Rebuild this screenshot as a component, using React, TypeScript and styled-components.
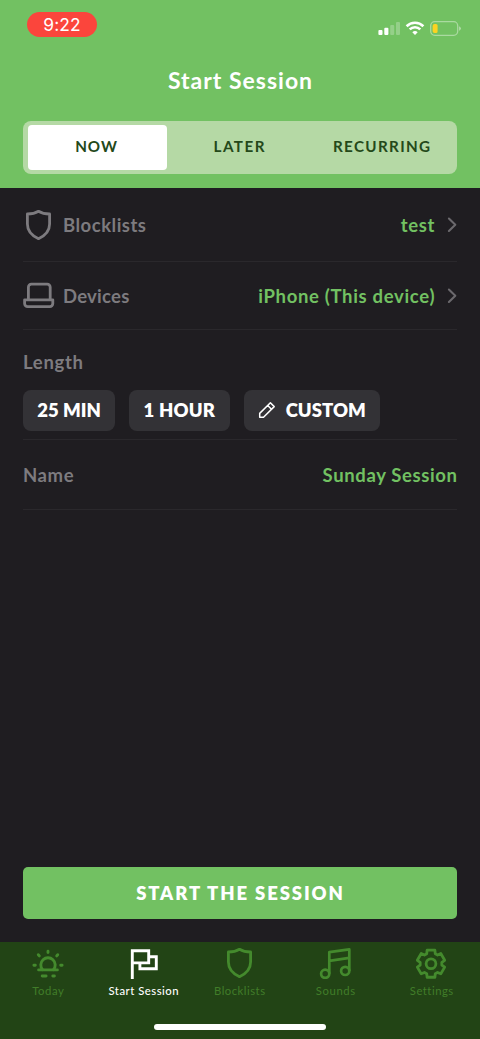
import React from 'react';
import type { ReactNode } from 'react';
import styled, { createGlobalStyle } from 'styled-components';

const color = {
  green: '#72c162',
  segment: '#b5d9a5',
  dark: '#1f1d21',
  chip: '#333236',
  line: '#2a282c',
  muted: '#7d7b7f',
  chevron: '#6b696d',
  bar: '#224415',
  tab: '#448a2d',
  tabText: '#417d29',
  ink: '#24491a',
};

const GlobalStyle = createGlobalStyle`
  * { box-sizing: border-box; }
  body { margin: 0; background: ${color.dark}; font-family: Lato, "Open Sans", sans-serif; }
  button { font: inherit; color: inherit; border: 0; padding: 0; background: none; }
  svg { display: block; flex: none; }
`;

const Screen = styled.div`
  width: 480px;
  height: 1039px;
  display: flex;
  flex-direction: column;
  background: ${color.dark};
  overflow: hidden;
`;

/* Tracked text; the negative margin drops the spacing after the last letter. */
const Text = styled.span<{ $size: number; $weight: number; $track: number; $color: string }>`
  font-size: ${(p) => p.$size}px;
  font-weight: ${(p) => p.$weight};
  letter-spacing: ${(p) => p.$track}px;
  margin-right: ${(p) => -p.$track}px;
  color: ${(p) => p.$color};
  line-height: 24px;
  white-space: nowrap;
`;

const Header = styled.header`
  height: 188px;
  flex: none;
  background: ${color.green};
  padding: 12px 23px 0;
  display: flex;
  flex-direction: column;
`;

const StatusBar = styled.div`
  height: 25px;
  display: flex;
  justify-content: space-between;
  padding-left: 4px;
`;

const Clock = styled.div`
  width: 70px;
  height: 25px;
  border-radius: 13px;
  background: #fb453c;
  color: #fff;
  font: 400 17.4px/25px Inter, sans-serif;
  letter-spacing: 0.1px;
  text-align: center;
`;

const StatusIcons = styled.div`
  display: flex;
  gap: 5px;
  align-items: flex-start;
  padding-top: 9px;
  margin-right: -3.5px;
`;

const Title = styled.h1`
  margin: 31px 0 0;
  height: 24px;
  line-height: 24px;
  display: flex;
  justify-content: center;
`;

const Segments = styled.div`
  margin-top: 29px;
  height: 53px;
  padding: 4px 5px;
  border-radius: 8px;
  background: ${color.segment};
  display: grid;
  grid-template-columns: 139px 1fr 138px;
`;

const Segment = styled.button<{ $active?: boolean }>`
  height: 45px;
  padding: 0 3px 3px 0;
  border-radius: 4px;
  background: ${(p) => (p.$active ? '#fff' : 'transparent')};
  display: flex;
  align-items: center;
  justify-content: center;
`;

const Main = styled.main`
  flex: 1;
  padding: 0 23px;
  display: flex;
  flex-direction: column;
`;

const Row = styled.div<{ $height: number }>`
  height: ${(p) => p.$height}px;
  border-bottom: 1px solid ${color.line};
  display: flex;
  align-items: center;
  justify-content: space-between;
`;

const RowLabel = styled.div`
  display: flex;
  align-items: center;
`;

const IconSlot = styled.span`
  width: 40px;
  display: flex;
  color: ${color.muted};
`;

const RowValue = styled.div`
  display: flex;
  align-items: center;
  gap: 12px;
  padding-right: 0.5px;
`;

const LengthSection = styled.section`
  height: 110px;
  padding-top: 20px;
  border-bottom: 1px solid ${color.line};
  display: flex;
  flex-direction: column;
`;

const Chips = styled.div`
  margin-top: 16px;
  display: flex;
  gap: 14px;
`;

const Chip = styled.button<{ $width: number }>`
  width: ${(p) => p.$width}px;
  height: 41px;
  padding-bottom: 1px;
  border-radius: 8px;
  background: ${color.chip};
  display: flex;
  align-items: center;
  justify-content: center;
  gap: 10px;
`;

const StartButton = styled.button`
  height: 52px;
  margin: auto 0 23px;
  padding-right: 1px;
  border-radius: 5px;
  background: ${color.green};
  display: flex;
  align-items: center;
  justify-content: center;
`;

const Footer = styled.footer`
  height: 97px;
  flex: none;
  background: ${color.bar};
  display: flex;
  flex-direction: column;
  align-items: center;
`;

const TabBar = styled.nav`
  width: 100%;
  height: 82px;
  display: grid;
  grid-template-columns: 95px 96px 96px 96px 96px;
`;

const Tab = styled.button<{ $active?: boolean }>`
  color: ${(p) => (p.$active ? '#fff' : color.tab)};
  display: flex;
  flex-direction: column;
  align-items: center;
  justify-content: flex-start;
  padding-top: 5px;
`;

const TabLabel = styled(Text)`
  padding-left: 1px;
`;

const HomeIndicator = styled.div`
  width: 172px;
  height: 6px;
  border-radius: 3px;
  background: #fff;
`;

const Shield = () => (
  <svg width="31" height="32" viewBox="-1.5 0 31 32" fill="none" stroke="currentColor" strokeWidth="2.8" strokeLinejoin="round">
    <path d="M14 2.3Q9.5 5 2.9 5V15C2.9 21.5 7 26.5 14 29.7C21 26.5 25.1 21.5 25.1 15V5Q18.5 5 14 2.3Z" />
  </svg>
);

const Laptop = () => (
  <svg width="32" height="28" viewBox="0.5 0 32 28" fill="none" stroke="currentColor" strokeWidth="2.8" strokeLinejoin="round">
    <path d="M5.9 17.6V5.2a3 3 0 0 1 3-3h15.8a3 3 0 0 1 3 3v12.4" />
    <path d="M2.1 17.8h28.2v3.8a3 3 0 0 1-3 3H5.1a3 3 0 0 1-3-3z" />
  </svg>
);

const Chevron = () => (
  <svg width="10" height="16" viewBox="0 0 10 16" fill="none" stroke={color.chevron} strokeWidth="2.1" strokeLinecap="round" strokeLinejoin="round">
    <path d="M1.9 1.6L8.3 7.8L1.9 14" />
  </svg>
);

const Pencil = () => (
  <svg width="18" height="18" viewBox="0 0 18 18" fill="none" stroke="#fff" strokeWidth="1.5" strokeLinejoin="round">
    <path d="M1.7 16.2V12.4L12.4 1.8L16.2 5.6L5.5 16.2ZM9.7 4.5l3.8 3.8" />
  </svg>
);

const Sunrise = () => (
  <svg width="32" height="32" viewBox="0 0 32 32" fill="none" stroke="currentColor" strokeWidth="2.9" strokeLinecap="round">
    <path d="M10.5 22.6a7.2 7.2 0 1 1 11 0" />
    <path d="M6.6 22.9h18.8M10.2 29h3.9M20.8 29h1.6" />
    <path d="M16 4.2v1.4M6.3 7.7l1 1.2M25.7 7.7l-1 1.2M1.9 18.2h1.4M28.7 18.2h1.4" />
  </svg>
);

const Flag = () => (
  <svg width="32" height="32" viewBox="-0.7 0 32 32" fill="none" stroke="currentColor" strokeWidth="2.9">
    <path d="M4.6 32V3.8H21V15.9H4.6" />
    <path d="M21 9.8h7.6v12H12.2v-5.9" />
  </svg>
);

const Music = () => (
  <svg width="32" height="32" viewBox="0 0 32 32" fill="none" stroke="currentColor" strokeWidth="2.7" strokeLinejoin="round">
    <circle cx="6.2" cy="26.8" r="4.1" />
    <circle cx="26.2" cy="23.9" r="4.1" />
    <path d="M10.3 26.8V5.1L30.3 2.4V23.9M10.3 13.9L30.3 10.8" />
  </svg>
);

const gearPoints = Array.from({ length: 6 }, (_, i) =>
  [
    [-23, 10.9],
    [-16, 14.1],
    [16, 14.1],
    [23, 10.9],
  ].map(([offset, radius]) => {
    const a = ((i * 60 + offset - 90) * Math.PI) / 180;
    return `${(16 + radius * Math.cos(a)).toFixed(2)},${(16.7 + radius * Math.sin(a)).toFixed(2)}`;
  }).join(' '),
).join(' ');

const Gear = () => (
  <svg width="32" height="32" viewBox="0 0 32 32" fill="none" stroke="currentColor" strokeWidth="2.8" strokeLinejoin="round">
    <polygon points={gearPoints} />
    <circle cx="16" cy="16.7" r="4.9" />
  </svg>
);

const Signal = () => (
  <svg width="22" height="14" viewBox="0 0 22 14" fill="#fff">
    <rect x="0.4" y="9" width="4.1" height="5" rx="1" />
    <rect x="6.3" y="6.8" width="4.1" height="7.2" rx="1" />
    <rect x="12.2" y="4" width="4" height="10" rx="1" opacity="0.25" />
    <rect x="18" y="1" width="4" height="13" rx="1" opacity="0.25" />
  </svg>
);

const Wifi = () => (
  <svg width="20" height="14" viewBox="0 0 20 14" fill="none" stroke="#fff" strokeWidth="2.6">
    <path d="M1.6 5.2a12 12 0 0 1 16.8 0" />
    <path d="M4.7 8.4a7.6 7.6 0 0 1 10.6 0" />
    <path d="M10 14L7.3 11.2a4 4 0 0 1 5.4 0Z" fill="#fff" stroke="none" />
  </svg>
);

const Battery = () => (
  <svg width="31" height="15" viewBox="0 0 31 15">
    <rect x="0.7" y="0.7" width="27" height="13.6" rx="4" fill="none" stroke="#fff" strokeOpacity="0.4" strokeWidth="1.3" />
    <path d="M29.3 5.2a2.6 2.6 0 0 1 0 4.6z" fill="#fff" opacity="0.6" />
    <path d="M4.6 2.9H6a1.6 1.6 0 0 1 1.6 1.6v6A1.6 1.6 0 0 1 6 12.1H4.6a2 2 0 0 1-2-2V4.9a2 2 0 0 1 2-2z" fill="#fbd321" />
  </svg>
);

const segments: { label: string; track: number; active?: boolean }[] = [
  { label: 'NOW', track: 1, active: true },
  { label: 'LATER', track: 1.5 },
  { label: 'RECURRING', track: 1.35 },
];

const chips: { label: string; track: number; width: number; icon?: ReactNode }[] = [
  { label: '25 MIN', track: 0, width: 92 },
  { label: '1 HOUR', track: 0.2, width: 100.5 },
  { label: 'CUSTOM', track: 0, width: 136.5, icon: <Pencil /> },
];

const tabs: { label: string; track: number; icon: ReactNode; active?: boolean }[] = [
  { label: 'Today', track: 0.55, icon: <Sunrise /> },
  { label: 'Start Session', track: 0.5, icon: <Flag />, active: true },
  { label: 'Blocklists', track: 0.5, icon: <Shield /> },
  { label: 'Sounds', track: 0.6, icon: <Music /> },
  { label: 'Settings', track: 0.5, icon: <Gear /> },
];

export default function App() {
  return (
    <Screen>
      <GlobalStyle />
      <Header>
        <StatusBar>
          <Clock>9:22</Clock>
          <StatusIcons>
            <Signal />
            <Wifi />
            <Battery />
          </StatusIcons>
        </StatusBar>
        <Title>
          <Text $size={23} $weight={700} $track={1} $color="#fff">Start Session</Text>
        </Title>
        <Segments>
          {segments.map((s) => (
            <Segment key={s.label} $active={s.active}>
              <Text $size={15.2} $weight={700} $track={s.track} $color={color.ink}>{s.label}</Text>
            </Segment>
          ))}
        </Segments>
      </Header>

      <Main>
        <Row $height={74}>
          <RowLabel>
            <IconSlot><Shield /></IconSlot>
            <Text $size={18.5} $weight={700} $track={0.5} $color={color.muted}>Blocklists</Text>
          </RowLabel>
          <RowValue>
            <Text $size={18.5} $weight={700} $track={0.7} $color={color.green}>test</Text>
            <Chevron />
          </RowValue>
        </Row>
        <Row $height={68}>
          <RowLabel>
            <IconSlot><Laptop /></IconSlot>
            <Text $size={18.5} $weight={700} $track={0.25} $color={color.muted}>Devices</Text>
          </RowLabel>
          <RowValue>
            <Text $size={18.5} $weight={700} $track={0.67} $color={color.green}>iPhone (This device)</Text>
            <Chevron />
          </RowValue>
        </Row>
        <LengthSection>
          <Text $size={18.5} $weight={700} $track={0.7} $color={color.muted}>Length</Text>
          <Chips>
            {chips.map((c) => (
              <Chip key={c.label} $width={c.width}>
                {c.icon}
                <Text $size={18.5} $weight={800} $track={c.track} $color="#fff">{c.label}</Text>
              </Chip>
            ))}
          </Chips>
        </LengthSection>
        <Row $height={70}>
          <Text $size={18.5} $weight={700} $track={0.6} $color={color.muted}>Name</Text>
          <Text $size={18.5} $weight={700} $track={0.63} $color={color.green}>Sunday Session</Text>
        </Row>
        <StartButton>
          <Text $size={18.5} $weight={800} $track={1.87} $color="#fff">START THE SESSION</Text>
        </StartButton>
      </Main>

      <Footer>
        <TabBar>
          {tabs.map((t) => (
            <Tab key={t.label} $active={t.active}>
              {t.icon}
              <TabLabel $size={11.3} $weight={t.active ? 500 : 400} $track={t.track} $color={t.active ? '#fff' : color.tabText}>{t.label}</TabLabel>
            </Tab>
          ))}
        </TabBar>
        <HomeIndicator />
      </Footer>
    </Screen>
  );
}
